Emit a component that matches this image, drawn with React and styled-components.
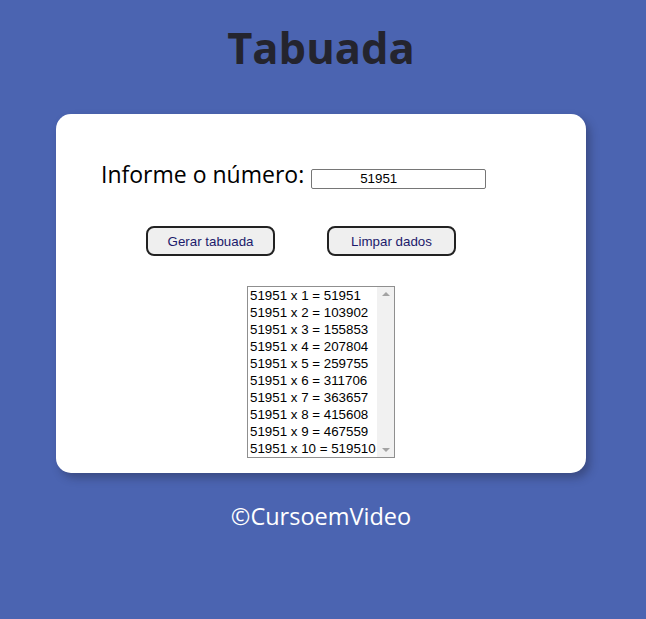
import React from "react";
import styled, { createGlobalStyle } from "styled-components";

const numero = 51951;
const linhas = Array.from({ length: 10 }, (_, i) => `${numero} x ${i + 1} = ${numero * (i + 1)}`);

const App = () => {
  return (
    <>
      <GlobalStyle />
      <Page>
        <Title>Tabuada</Title>
        <Card>
          <FieldRow>
            <Label htmlFor="num">Informe o número:</Label>
            <NumberInput id="num" defaultValue={numero} />
          </FieldRow>
          <ButtonRow>
            <Button>Gerar tabuada</Button>
            <Button>Limpar dados</Button>
          </ButtonRow>
          <ListBox>
            <Options>
              {linhas.map((linha) => (
                <Option key={linha}>{linha}</Option>
              ))}
            </Options>
            <ScrollTrack>
              <Arrow />
              <Arrow $down />
            </ScrollTrack>
          </ListBox>
        </Card>
        <Footer>©CursoemVideo</Footer>
      </Page>
    </>
  );
};

const GlobalStyle = createGlobalStyle`
  html, body {
    margin: 0;
    background-color: #4b64b1;
  }
  body {
    font-family: "Open Sans", "Noto Sans", sans-serif;
  }
`;

const Page = styled.div`
  width: 646px;
  min-height: 619px;
  display: flex;
  flex-direction: column;
  align-items: center;
  padding-right: 4px;
  box-sizing: border-box;
`;

const Title = styled.h1`
  margin: 16px 0 0;
  font-size: 43.5px;
  line-height: 64px;
  font-weight: 700;
  color: #24242e;
`;

const Card = styled.div`
  margin-top: 34px;
  width: 530px;
  height: 359px;
  box-sizing: border-box;
  background: #ffffff;
  border-radius: 15px;
  box-shadow: 4px 5px 8px rgba(30, 30, 50, 0.35);
  display: flex;
  flex-direction: column;
  align-items: center;
  padding-top: 45px;
`;

const FieldRow = styled.div`
  display: flex;
  align-items: center;
  gap: 7px;
  align-self: flex-start;
  margin-left: 45px;
`;

const Label = styled.label`
  font-size: 23px;
  line-height: 30px;
  color: #000;
`;

const NumberInput = styled.input`
  width: 175px;
  height: 20px;
  box-sizing: border-box;
  border: 1px solid #767676;
  border-radius: 2px;
  padding: 0 0 0 48px;
  margin-top: 9px;
  font-family: Arial, "Liberation Sans", sans-serif;
  font-size: 13.33px;
  color: #000;
  outline: none;
`;

const ButtonRow = styled.div`
  margin-top: 37px;
  display: flex;
  gap: 52px;
  align-self: flex-start;
  margin-left: 90px;
`;

const Button = styled.button`
  width: 129px;
  height: 30px;
  background: #efefef;
  border: 2px solid #222;
  border-radius: 8px;
  font-family: Arial, "Liberation Sans", sans-serif;
  font-size: 13.33px;
  color: #1c1a6b;
  cursor: pointer;
`;

const ListBox = styled.div`
  margin-top: 30px;
  width: 148px;
  height: 172px;
  box-sizing: border-box;
  border: 1px solid #8f8f8f;
  display: flex;
`;

const Options = styled.div`
  flex: 1;
`;

const Option = styled.div`
  font-family: Arial, "Liberation Sans", sans-serif;
  font-size: 13.33px;
  line-height: 17px;
  padding-left: 2px;
  color: #000;
  white-space: nowrap;
`;

const ScrollTrack = styled.div`
  width: 17px;
  background: #f1f1f1;
  display: flex;
  flex-direction: column;
  justify-content: space-between;
  align-items: center;
  padding: 5px 0;
`;

const Arrow = styled.div`
  width: 0;
  height: 0;
  border-left: 4px solid transparent;
  border-right: 4px solid transparent;
  ${(p) => (p.$down ? "border-top: 4px solid #a3a3a3;" : "border-bottom: 4px solid #a3a3a3;")}
`;

const Footer = styled.div`
  margin-top: 27px;
  font-size: 23.5px;
  line-height: 32px;
  color: #ffffff;
`;

export default App;
